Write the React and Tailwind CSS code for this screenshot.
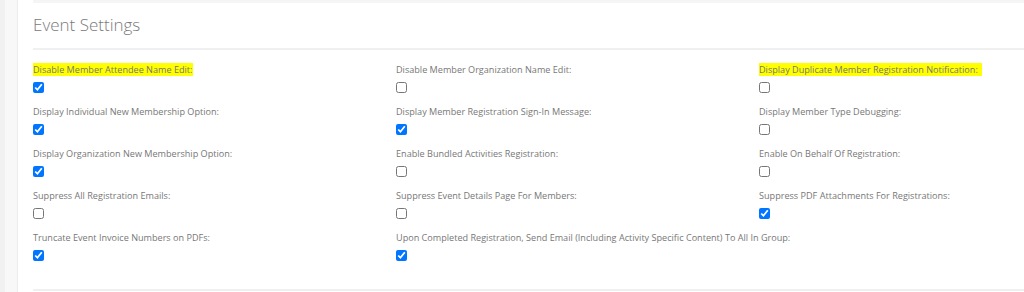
import React from "react";

const items = [
  ["Disable Member Attendee Name Edit:", true, 1],
  ["Disable Member Organization Name Edit:", false, 0],
  ["Display Duplicate Member Registration Notification:", false, 2],
  ["Display Individual New Membership Option:", true, 0],
  ["Display Member Registration Sign-In Message:", true, 0],
  ["Display Member Type Debugging:", false, 0],
  ["Display Organization New Membership Option:", true, 0],
  ["Enable Bundled Activities Registration:", false, 0],
  ["Enable On Behalf Of Registration:", false, 0],
  ["Suppress All Registration Emails:", false, 0],
  ["Suppress Event Details Page For Members:", false, 0],
  ["Suppress PDF Attachments For Registrations:", true, 0],
  ["Truncate Event Invoice Numbers on PDFs:", true, 0],
  ["Upon Completed Registration, Send Email (Including Activity Specific Content) To All In Group:", true, 0],
];

export default function App() {
  return (
    <div
      className="flex h-[292px] w-[1024px] overflow-hidden bg-[#f7f7f7]"
      style={{ fontFamily: '"Open Sans", sans-serif' }}
    >
      <div className="w-[5px] shrink-0 bg-[#f1f1f1]" />
      <div className="w-[13px] shrink-0 border-r border-[#ececec] bg-[#f8f8f8]" />
      <div className="flex-1 bg-white pl-[15px]">
        <div className="h-[3px] bg-[#f5f5f5]" />
        <h2 className="h-[45px] pt-[11px] text-[17px] font-light leading-[22px] text-[#7a7a7a]">
          Event Settings
        </h2>
        <div className="h-[2px] bg-[#f0f0f0]" />
        <div className="grid w-[1089px] grid-cols-[363px_363px_363px] pt-[13px]">
          {items.map(([label, checked, hl]) => (
            <div key={label} className="flex h-[42px] flex-col items-start">
              <span
                className={
                  "whitespace-nowrap text-[9.1px] leading-[13px] text-[#777] " +
                  (hl === 1 ? "bg-[#ffff00] pr-[1px]" : hl === 2 ? "bg-[#ffff00] pr-[4px]" : "")
                }
              >
                {label}
              </span>
              <input
                type="checkbox"
                defaultChecked={checked}
                className="m-0 mt-[6px] h-[11px] w-[11px]"
              />
            </div>
          ))}
        </div>
        <div className="mt-[16px] h-[2px] bg-[#f0f0f0]" />
      </div>
    </div>
  );
}
